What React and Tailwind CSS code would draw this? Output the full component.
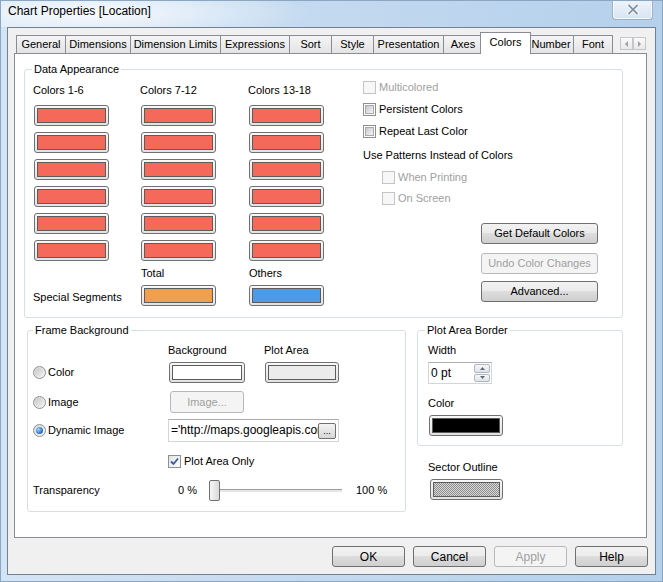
import React from "react";

const FONT = "font-['Liberation_Sans',Arial,sans-serif]";
const RED = "bg-[#f4695a]";
const BTN_BG =
  "bg-[image:linear-gradient(#f2f2f2_0%,#ebebeb_48%,#dddddd_50%,#cfcfcf_100%)]";

const tabs = [
  { label: "General", w: "w-[50px]" },
  { label: "Dimensions", w: "w-[66px]" },
  { label: "Dimension Limits", w: "w-[91px]" },
  { label: "Expressions", w: "w-[70px]" },
  { label: "Sort", w: "w-[43px]" },
  { label: "Style", w: "w-[43px]" },
  { label: "Presentation", w: "w-[71px]" },
  { label: "Axes", w: "w-[40px]" },
  { label: "Colors", w: "w-[51px]", active: true },
  { label: "Number", w: "w-[46px]" },
  { label: "Font", w: "w-[40px]" },
];

function Swatch({ fill, className = "w-[75px] h-[21px]" }) {
  return (
    <div
      className={`rounded-[3px] border border-[#707070] bg-[image:linear-gradient(#f8f8f8,#e2e2e2)] p-[2px] ${className}`}
    >
      <div className={`h-full w-full border border-[#5c5c5c] ${fill}`} />
    </div>
  );
}

function Button({ children, disabled, className = "" }) {
  return (
    <div
      className={`flex h-[21px] items-center justify-center rounded-[3px] border ${
        disabled
          ? "border-[#b5b9bc] bg-[#f4f4f4] text-[#a0a0a0]"
          : `border-[#707070] ${BTN_BG} text-black`
      } ${className}`}
    >
      {children}
    </div>
  );
}

function Check({ checked, disabled }) {
  return (
    <span
      className={`flex h-[13px] w-[13px] shrink-0 items-center justify-center border ${
        disabled ? "border-[#c4c4c4] bg-[#f7f7f7]" : "border-[#8e8f8f] bg-white"
      }`}
    >
      {!disabled && !checked && (
        <span className="h-[9px] w-[9px] border border-[#a6a9ad] bg-[image:linear-gradient(135deg,#c5c8cc,#f4f4f4)]" />
      )}
      {checked && (
        <span className="flex h-[11px] w-[11px] items-center justify-center bg-[image:linear-gradient(135deg,#dfe3e8,#ffffff)]">
          <svg width="9" height="9" viewBox="0 0 9 9">
            <path d="M1 4.5 L3.5 7 L8 1.5" fill="none" stroke="#3a5a9c" strokeWidth="1.8" />
          </svg>
        </span>
      )}
    </span>
  );
}

function CheckRow({ label, checked, disabled, className = "" }) {
  return (
    <div className={`flex h-[13px] items-center gap-[3px] ${className}`}>
      <Check checked={checked} disabled={disabled} />
      <span className={`leading-[13px] ${disabled ? "text-[#a0a0a0]" : ""}`}>{label}</span>
    </div>
  );
}

function Radio({ on }) {
  return (
    <span className="flex h-[13px] w-[13px] shrink-0 items-center justify-center rounded-full border border-[#8e8f8f] bg-[image:linear-gradient(135deg,#d6d6d6,#fbfbfb)]">
      {on ? (
        <span className="h-[7px] w-[7px] rounded-full bg-[image:radial-gradient(circle_at_35%_35%,#9fd3ff,#1d62b0_75%)]" />
      ) : (
        <span className="h-[9px] w-[9px] rounded-full bg-[image:linear-gradient(135deg,#c8c8c8,#f2f2f2)]" />
      )}
    </span>
  );
}

function RadioRow({ label, on }) {
  return (
    <div className="flex w-[135px] items-center gap-[2px]">
      <Radio on={on} />
      <span className="leading-[13px]">{label}</span>
    </div>
  );
}

function GroupBox({ title, legend = "left-[7px]", className = "", children }) {
  return (
    <div className={`relative shrink-0 rounded-[3px] border border-[#d5dfe5] ${className}`}>
      <span className={`absolute -top-[7px] ${legend} bg-white px-[2px] leading-[13px]`}>
        {title}
      </span>
      {children}
    </div>
  );
}

function ColorColumn({ title, label, special, w }) {
  return (
    <div className={`flex flex-col ${w}`}>
      <span className="h-[13px] leading-[13px] -ml-px">{title}</span>
      <div className="mt-[8px] flex flex-col gap-[6px]">
        {[0, 1, 2, 3, 4, 5].map((i) => (
          <Swatch key={i} fill={RED} />
        ))}
      </div>
      <span className="mt-[6px] h-[13px] leading-[13px]">{label}</span>
      {special ? (
        <Swatch fill={special} className="mt-[5px] h-[21px] w-[75px]" />
      ) : (
        <span className="mt-[11px] -ml-px h-[13px] leading-[13px]">Special Segments</span>
      )}
    </div>
  );
}

export default function App() {
  return (
    <div
      className={`${FONT} relative h-[582px] w-[663px] overflow-hidden border border-[#8aa6c1] bg-[image:linear-gradient(90deg,#d3e4f5_0%,#c4daf0_45%,#b5d0eb_100%)] text-[11px] text-black`}
    >
      {/* Title bar */}
      <div className="flex h-[26px] items-start justify-between bg-[image:radial-gradient(ellipse_220px_30px_at_90px_12px,rgba(255,255,255,0.85),rgba(255,255,255,0))]">
        <span className="pl-[7px] pt-[3px] text-[12px] leading-[15px]">Chart Properties [Location]</span>
        <div className="-mt-px mr-[9px] flex h-[20px] w-[41px] items-center justify-center rounded-b-[4px] border border-t-0 border-[#9fb2c7] bg-[image:linear-gradient(#eef4fb,#d6e4f2)] shadow-[inset_0_0_0_1px_rgba(255,255,255,0.7)]">
          <svg width="12" height="11" viewBox="0 0 12 11">
            <path d="M2 1.5 L10 9.5 M10 1.5 L2 9.5" stroke="#ffffff" strokeWidth="3.6" strokeLinecap="square" />
            <path d="M2 1.5 L10 9.5 M10 1.5 L2 9.5" stroke="#8494a8" strokeWidth="1.8" strokeLinecap="square" />
          </svg>
        </div>
      </div>

      {/* Client area */}
      <div className="ml-[6px] flex h-[548px] w-[649px] flex-col border border-[#6f8196] bg-[#f0f0f0]">
        {/* Tabs */}
        <div className="ml-[6px] mt-[4px] flex h-[21px] w-[633px] items-end">
          <div className="ml-[2px] flex items-end">
            {tabs.map((t, i) =>
              t.active ? (
                <div
                  key={t.label}
                  className={`relative z-10 -mb-px -ml-[3px] -mr-[2px] flex h-[22px] ${t.w} items-start justify-center border border-b-0 border-[#898c95] bg-white pt-[3px] leading-[13px]`}
                >
                  {t.label}
                </div>
              ) : (
                <div
                  key={t.label}
                  className={`${i === 0 ? "" : "-ml-px"} flex h-[18px] ${t.w} items-center justify-center border border-b-0 border-[#898c95] bg-[image:linear-gradient(#f5f5f5,#e3e3e3)] leading-[13px]`}
                >
                  {t.label}
                </div>
              )
            )}
          </div>
          <div className="mb-[3px] ml-auto mr-[1px] flex">
            {["M5 1 L2 4 L5 7", "M2 1 L5 4 L2 7"].map((d) => (
              <div
                key={d}
                className="flex h-[13px] w-[13px] items-center justify-center border border-[#c4c8cc] bg-[image:linear-gradient(#fafafa,#e8e8e8)]"
              >
                <svg width="7" height="8" viewBox="0 0 7 8">
                  <path d={d} fill="#9aa0a6" />
                </svg>
              </div>
            ))}
          </div>
        </div>

        {/* Panel */}
        <div className="ml-[6px] flex h-[485px] w-[633px] flex-col border border-[#898c95] bg-white">
          <GroupBox title="Data Appearance" className="ml-[9px] mt-[15px] h-[249px] w-[599px]">
            <div className="flex pl-[9px] pt-[11px]">
              <div className="mt-[3px] flex">
                <ColorColumn title="Colors 1-6" w="w-[107px]" />
                <ColorColumn title="Colors 7-12" label="Total" special="bg-[#eea04f]" w="w-[108px]" />
                <ColorColumn title="Colors 13-18" label="Others" special="bg-[#4c9be8]" w="w-[75px]" />
              </div>
              <div className="ml-[39px] flex flex-col items-start">
                <CheckRow label="Multicolored" disabled />
                <CheckRow label="Persistent Colors" className="mt-[9px]" />
                <CheckRow label="Repeat Last Color" className="mt-[9px]" />
                <span className="mt-[11px] h-[13px] leading-[13px]">Use Patterns Instead of Colors</span>
                <CheckRow label="When Printing" disabled className="ml-[19px] mt-[9px]" />
                <CheckRow label="On Screen" disabled className="ml-[19px] mt-[8px]" />
                <Button className="ml-[118px] mt-[18px] w-[117px]">Get Default Colors</Button>
                <Button disabled className="ml-[118px] mt-[9px] w-[117px]">Undo Color Changes</Button>
                <Button className="ml-[118px] mt-[7px] w-[117px]">Advanced...</Button>
              </div>
            </div>
          </GroupBox>

          <div className="ml-[12px] mt-[12px] flex items-start">
            <GroupBox title="Frame Background" legend="left-[5px]" className="h-[182px] w-[379px]">
              <div className="flex flex-col pl-[5px] pt-[13px]">
                <div className="flex h-[13px] leading-[13px]">
                  <span className="ml-[135px] w-[96px]">Background</span>
                  <span>Plot Area</span>
                </div>
                <div className="mt-[5px] flex h-[21px] items-center">
                  <RadioRow label="Color" />
                  <Swatch fill="bg-white" className="ml-px h-[21px] w-[76px]" />
                  <Swatch fill="bg-[#ececec]" className="ml-[20px] h-[21px] w-[74px]" />
                </div>
                <div className="mt-[8px] flex h-[22px] items-center">
                  <RadioRow label="Image" />
                  <Button disabled className="ml-[2px] h-[22px] w-[74px]">Image...</Button>
                </div>
                <div className="mt-[6px] flex h-[23px] items-center">
                  <RadioRow label="Dynamic Image" on />
                  <div className="flex h-[23px] w-[171px] items-center border border-[#d2d6dc] border-t-[#abadb3] bg-white pl-[2px] pr-[2px]">
                    <span className="min-w-0 flex-1 overflow-hidden whitespace-nowrap text-[12px] leading-[15px]">
                      ='http://maps.googleapis.com/maps/api
                    </span>
                    <div className="flex h-[16px] w-[18px] shrink-0 items-end justify-center rounded-[2px] border border-[#707070] bg-[image:linear-gradient(#f4f4f4,#d6d6d6)] pb-[2px] text-[9px] leading-[9px]">
                      ...
                    </div>
                  </div>
                </div>
                <div className="mt-[13px] flex h-[13px] items-center">
                  <CheckRow label="Plot Area Only" checked className="ml-[135px]" />
                </div>
                <div className="mt-[12px] flex h-[21px] items-center">
                  <span className="w-[145px] leading-[13px]">Transparency</span>
                  <span className="w-[31px] leading-[13px]">0 %</span>
                  <div className="flex w-[133px] items-center">
                    <div className="h-[21px] w-[11px] shrink-0 rounded-[2px] border border-[#707070] bg-[image:linear-gradient(90deg,#f6f6f6,#dadada)]" />
                    <div className="h-[3px] flex-1 border-t border-[#9c9c9c] bg-[#e6e6e6]" />
                  </div>
                  <span className="ml-[14px] leading-[13px]">100 %</span>
                </div>
              </div>
            </GroupBox>

            <div className="ml-[11px] flex flex-col">
              <GroupBox title="Plot Area Border" className="h-[116px] w-[206px]">
                <div className="flex flex-col items-start pl-[10px] pt-[13px]">
                  <span className="h-[13px] leading-[13px]">Width</span>
                  <div className="mt-[5px] flex h-[22px] w-[64px] border border-[#d2d6dc] border-t-[#abadb3] bg-white">
                    <span className="flex-1 pl-[2px] text-[12px] leading-[20px]">0 pt</span>
                    <div className="flex w-[17px] flex-col gap-px py-px pr-px">
                      {["M1 4 L3.5 1 L6 4 Z", "M1 1 L3.5 4 L6 1 Z"].map((d) => (
                        <div
                          key={d}
                          className="flex flex-1 items-center justify-center rounded-[2px] border border-[#b0b6bd] bg-[image:linear-gradient(#f6f7f9,#dfe3e8)]"
                        >
                          <svg width="7" height="5" viewBox="0 0 7 5">
                            <path d={d} fill="#5d6b7b" />
                          </svg>
                        </div>
                      ))}
                    </div>
                  </div>
                  <span className="mt-[13px] h-[13px] leading-[13px]">Color</span>
                  <Swatch fill="bg-black" className="ml-px mt-[5px] h-[21px] w-[74px]" />
                </div>
              </GroupBox>
              <span className="ml-[11px] mt-[15px] h-[13px] leading-[13px]">Sector Outline</span>
              <Swatch
                fill="bg-[image:repeating-conic-gradient(#8c8c8c_0%_25%,#d9d9d9_0%_50%)] bg-[length:2px_2px]"
                className="ml-[13px] mt-[5px] h-[21px] w-[73px]"
              />
            </div>
          </div>
        </div>

        {/* Dialog buttons */}
        <div className="mt-[8px] flex justify-end gap-[8px] pr-[7px]">
          <Button className="w-[73px] text-[12px]">OK</Button>
          <Button className="w-[73px] text-[12px]">Cancel</Button>
          <Button disabled className="w-[73px] text-[12px]">Apply</Button>
          <Button className="w-[73px] text-[12px]">Help</Button>
        </div>
      </div>
    </div>
  );
}
